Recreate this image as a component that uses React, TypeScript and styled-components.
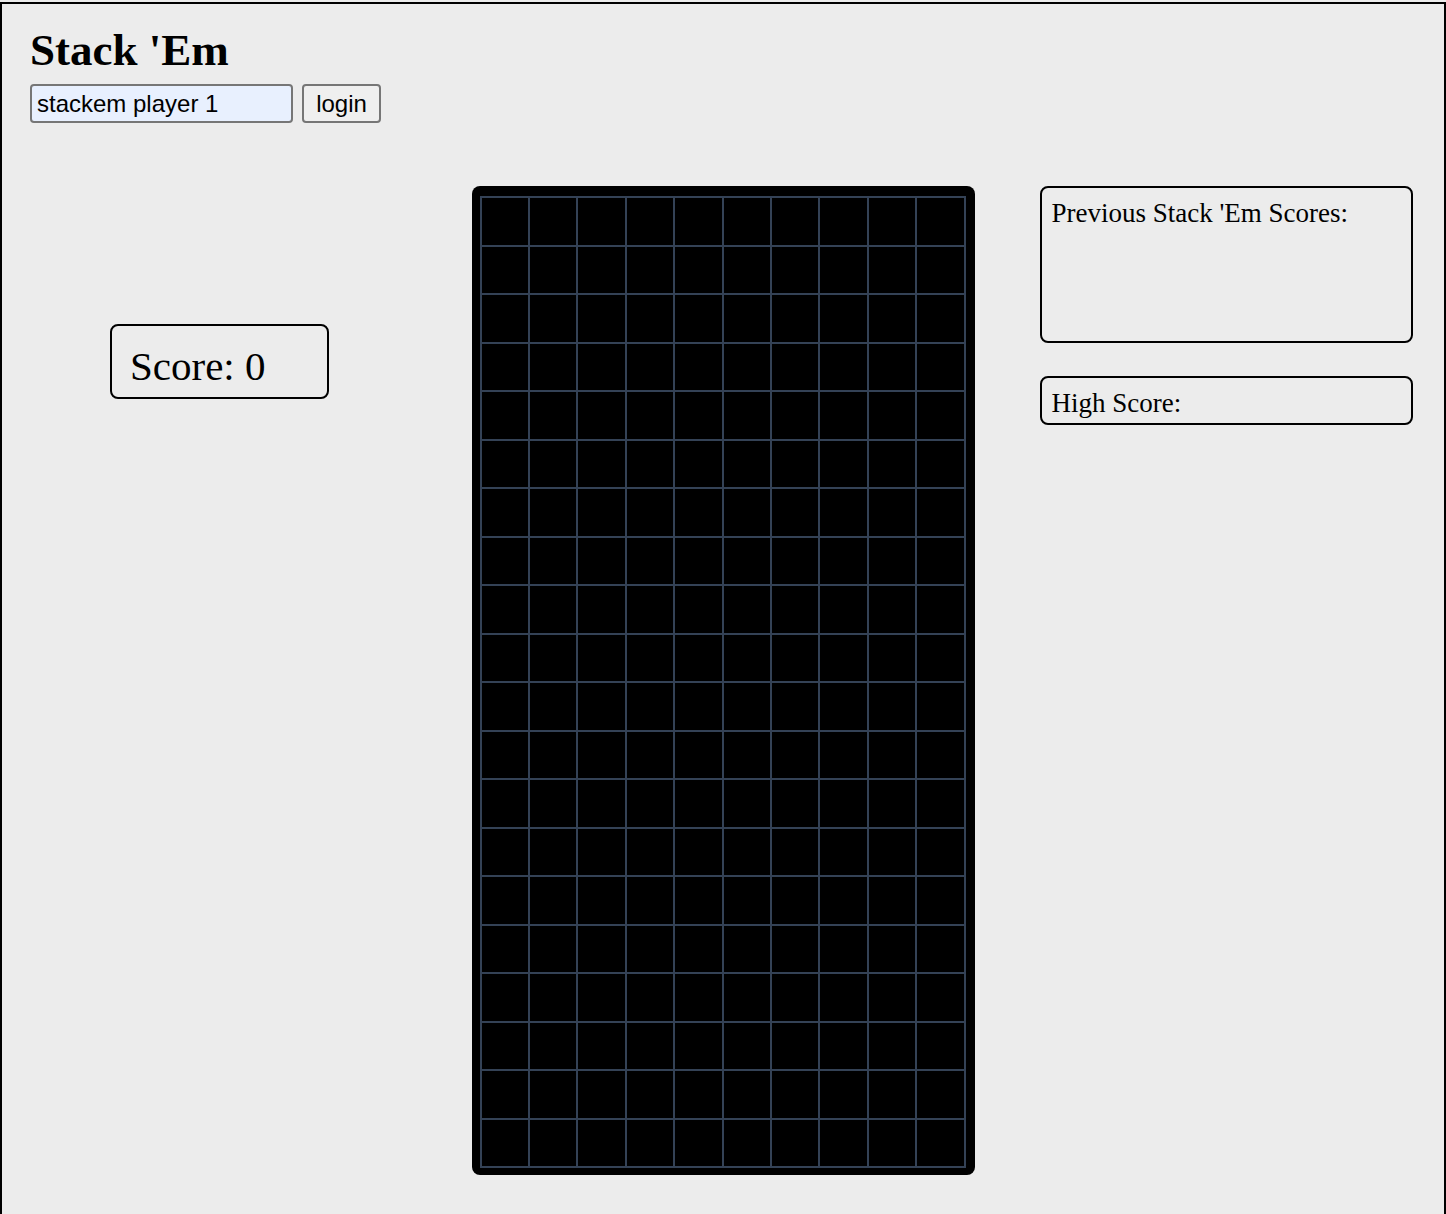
import { createGlobalStyle } from 'styled-components'
import styled from 'styled-components'

const GlobalStyle = createGlobalStyle`
	html, body {
		margin: 0;
		padding: 0;
		background: #ececec;
	}
	body {
		font-family: 'Liberation Serif', 'Times New Roman', serif;
		color: #000;
	}
`

const Page = styled.div`
	margin-top: 2px;
	border: 2px solid #000;
	background: #ececec;
	padding: 20px 28px 60px;
`

const Title = styled.h1`
	margin: 0;
	font-size: 45px;
	font-weight: bold;
	line-height: normal;
`

const LoginRow = styled.div`
	display: flex;
	align-items: center;
	gap: 9px;
	margin-top: 8px;
`

const NameInput = styled.input`
	box-sizing: border-box;
	width: 263px;
	height: 39px;
	padding: 0 5px;
	border: 2px solid #767676;
	border-radius: 4px;
	background: #e8f0fe;
	font-family: 'Liberation Sans', Arial, sans-serif;
	font-size: 24px;
	color: #000;
	outline: none;
`

const LoginButton = styled.button`
	box-sizing: border-box;
	width: 79px;
	height: 39px;
	padding: 0;
	border: 2px solid #767676;
	border-radius: 4px;
	background: #efefef;
	font-family: 'Liberation Sans', Arial, sans-serif;
	font-size: 24px;
	color: #000;
`

const GameArea = styled.div`
	display: grid;
	grid-template-columns: 1fr 503px 1fr;
	margin-top: 63px;
`

const LeftColumn = styled.div`
	padding-left: 80px;
`

const ScoreBox = styled.div`
	box-sizing: border-box;
	width: 219px;
	height: 75px;
	margin-top: 138px;
	padding: 16px 18px 0;
	border: 2px solid #000;
	border-radius: 8px;
	font-size: 41px;
	line-height: normal;
`

const Board = styled.div`
	box-sizing: border-box;
	height: 989px;
	padding: 10px 9px 7px 8px;
	background: #000;
	border-radius: 8px;
`

const Grid = styled.div`
	display: grid;
	grid-template-columns: repeat(10, 1fr);
	grid-template-rows: repeat(20, 1fr);
	height: 100%;
	box-sizing: border-box;
	border: 1px solid #344256;
`

const Cell = styled.div<{ $filled?: string }>`
	box-sizing: border-box;
	border: 1px solid #344256;
	background: ${p => p.$filled || '#000'};
`

const RightColumn = styled.div`
	display: flex;
	flex-direction: column;
	gap: 33px;
	padding-left: 65px;
`

const Panel = styled.div<{ $tall?: boolean }>`
	box-sizing: border-box;
	width: 373px;
	height: ${p => (p.$tall ? '157px' : '49px')};
	padding: 10px 10px 0;
	border: 2px solid #000;
	border-radius: 8px;
	font-size: 27px;
	line-height: normal;
`

const cells = Array.from({ length: 200 }, (_, i) => i)

const App = () => {
	return (
		<>
			<GlobalStyle />
			<Page>
				<Title>Stack 'Em</Title>
				<LoginRow>
					<NameInput defaultValue="stackem player 1" />
					<LoginButton>login</LoginButton>
				</LoginRow>
				<GameArea>
					<LeftColumn>
						<ScoreBox>Score: 0</ScoreBox>
					</LeftColumn>
					<Board>
						<Grid>
							{cells.map(i => (
								<Cell key={i} />
							))}
						</Grid>
					</Board>
					<RightColumn>
						<Panel $tall>Previous Stack 'Em Scores:</Panel>
						<Panel>High Score:</Panel>
					</RightColumn>
				</GameArea>
			</Page>
		</>
	)
}

export default App
